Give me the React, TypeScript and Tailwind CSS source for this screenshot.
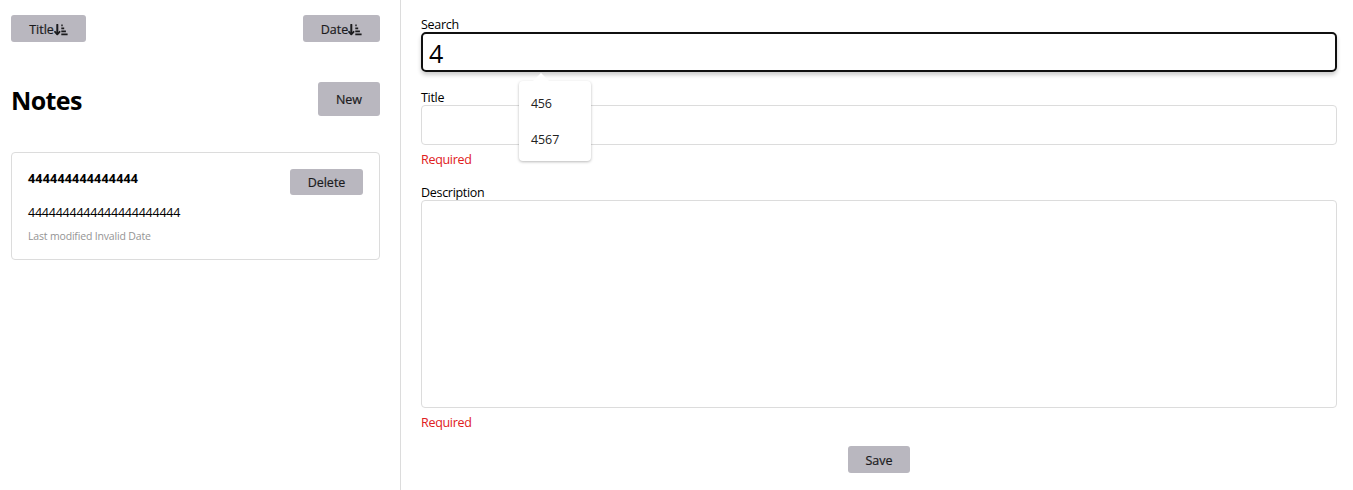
import type { ReactNode } from "react";

function Button({ className, children }: { className: string; children: ReactNode }) {
  return (
    <button
      type="button"
      className={`flex shrink-0 items-center justify-center rounded-[3px] bg-[#b9b7bf] text-[12.5px] leading-none font-medium text-[#1b1b1d] [-webkit-text-stroke:0.2px_#1b1b1d] ${className}`}
    >
      {children}
    </button>
  );
}

function SortIcon() {
  return (
    <svg className="h-[12px] w-[14px] shrink-0" viewBox="0 0 14 12" fill="none" stroke="currentColor">
      <path d="M3.3 0.8V9.6" strokeWidth="2" strokeLinecap="round" />
      <path d="M1 7.8 3.3 10.3 5.6 7.8" strokeWidth="1.8" strokeLinecap="round" strokeLinejoin="round" />
      <path d="M7.3 1.4H8.7M7.3 4.4H10.2M7.3 7.4H11.9M7.3 10.4H13.6" strokeWidth="1.6" />
    </svg>
  );
}

function Sidebar() {
  return (
    <aside className="flex w-[401px] shrink-0 flex-col border-r border-[#dcdcdc] pt-[15px] pr-5 pl-[11px]">
      <div className="flex justify-between">
        <Button className="h-[27px] w-[75px] pt-[3px]">
          <span>Title</span>
          <SortIcon />
        </Button>
        <Button className="h-[27px] w-[77px] pt-[3px]">
          <span>Date</span>
          <SortIcon />
        </Button>
      </div>
      <div className="mt-10 flex h-[34px] items-center justify-between">
        <h1 className="pt-[2px] text-[25px] leading-none font-bold tracking-[-0.6px]">Notes</h1>
        <Button className="h-[34px] w-[62px] pt-[2px]">New</Button>
      </div>
      <article className="mt-9 h-[108px] rounded-[4px] border border-[#dcdcdc] px-4 pt-4">
        <div className="flex items-start justify-between">
          <h2 className="pt-[3px] text-[12.5px] leading-[14px] font-bold tracking-[0.2px]">444444444444444</h2>
          <Button className="h-[26px] w-[73px] pt-[2px]">Delete</Button>
        </div>
        <p className="mt-[10px] text-[12.5px] leading-[16px] tracking-[-0.23px]">4444444444444444444444</p>
        <p className="mt-[7px] text-[10.5px] leading-[16px] tracking-[-0.17px] text-[#949494]">Last modified Invalid Date</p>
      </article>
    </aside>
  );
}

function Suggestions() {
  return (
    <div className="absolute top-[49px] left-[98px] z-10 flex h-[80px] w-[72px] flex-col rounded-[4px] bg-white pt-[5px] text-[12.5px] text-[#222] shadow-[0_1px_3px_rgba(0,0,0,0.28)]">
      <svg className="absolute -top-[9px] left-[13px]" width="18" height="10" viewBox="0 0 18 10">
        <path d="M0 10 9 1l9 9Z" fill="#fff" />
      </svg>
      <div className="flex h-9 items-center pl-3">456</div>
      <div className="flex h-9 items-center pl-3 tracking-[-0.1px]">4567</div>
    </div>
  );
}

export default function App() {
  return (
    <div className="flex h-[490px] w-full overflow-hidden bg-white font-['Open_Sans','Noto_Sans',sans-serif] text-black">
      <Sidebar />
      <main className="flex min-w-0 flex-1 flex-col pt-4 pr-4 pl-5 text-[12.5px] tracking-[-0.3px]">
        <label className="h-4 leading-[17px]" htmlFor="search">Search</label>
        <div className="relative">
          <input
            id="search"
            defaultValue="4"
            className="block h-10 w-full rounded-[5px] border-2 border-[#101010] px-[6px] pt-[2px] text-[25px] leading-none shadow-[0_3px_4px_rgba(0,0,0,0.2)] outline-none"
          />
          <Suggestions />
        </div>
        <label className="mt-[17px] h-4 leading-[17px]" htmlFor="title">Title</label>
        <input id="title" className="block h-10 w-full rounded-[4px] border border-[#dcdcdc] outline-none" />
        <p className="mt-[6px] h-4 leading-[17px] text-[#e02020]">Required</p>
        <label className="mt-[17px] h-4 leading-[17px]" htmlFor="description">Description</label>
        <textarea
          id="description"
          className="block h-[208px] w-full shrink-0 resize-none rounded-[4px] border border-[#dcdcdc] outline-none"
        />
        <p className="mt-[6px] h-4 leading-[17px] text-[#e02020]">Required</p>
        <div className="mt-4 flex justify-center">
          <Button className="h-[27px] w-[62px] pt-[3px] tracking-normal">Save</Button>
        </div>
      </main>
    </div>
  );
}
